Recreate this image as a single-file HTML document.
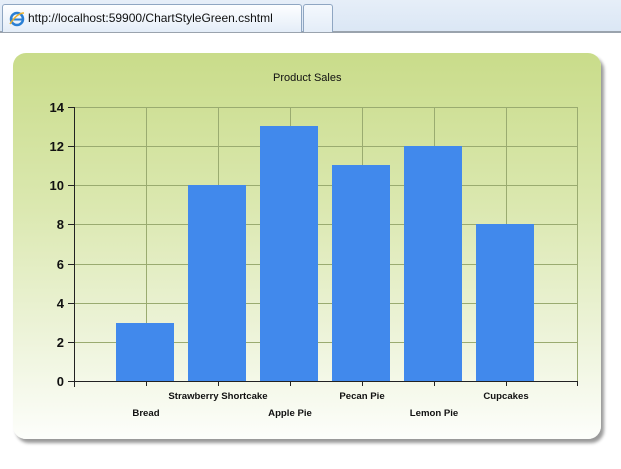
<!DOCTYPE html>
<html><head><style>
body{margin:0;width:621px;height:469px;background:#fff;position:relative;overflow:hidden;font-family:"Liberation Sans",sans-serif}
.bar{position:absolute;left:0;top:0;width:621px;height:31px;background:linear-gradient(#e6eef8,#dbe7f5);border-bottom:2px solid #9aa3ad}
.tab{position:absolute;left:2px;top:4px;width:298px;height:27px;background:linear-gradient(#fdfeff,#e4edf8);border:1px solid #8fa6c2;border-bottom:none;border-radius:3px 3px 0 0;font-size:12px;color:#111;line-height:26px}
.tab2{position:absolute;left:303px;top:4px;width:28px;height:27px;background:linear-gradient(#f4f8fd,#e4edf8);border:1px solid #8fa6c2;border-bottom:none;border-radius:3px 3px 0 0}
.panel{position:absolute;left:13px;top:53px;width:588px;height:386px;border-radius:13px;background:linear-gradient(#c9dc8a 0%,#dbe8b0 40%,#f1f6e2 80%,#fdfefb 100%);box-shadow:3px 4px 3px #9a9a9a}
.t{position:absolute;font-size:9.6px;font-weight:bold;color:#111;white-space:nowrap;transform:translateX(-50%)}
.y{position:absolute;font-size:13px;font-weight:bold;color:#111;text-align:right;width:30px}
</style></head><body>
<div class="bar"><div class="tab"><svg style="position:absolute;left:6px;top:6px" width="16" height="16" viewBox="0 0 16 16"><circle cx="8" cy="8" r="6" fill="none" stroke="#2a7fd4" stroke-width="2.5"/><rect x="3" y="7.5" width="10" height="2" fill="#2a7fd4"/><path d="M1 13 Q8 2 15 2" stroke="#e8b030" stroke-width="1.5" fill="none"/></svg><span style="position:absolute;left:25px">http://localhost:59900/ChartStyleGreen.cshtml</span></div><div class="tab2"></div></div>
<div class="panel"></div>
<div style="position:absolute;left:273px;top:72px;font-size:11px;color:#111">Product Sales</div>
<svg style="position:absolute;left:0;top:0" width="621" height="469">
<g stroke="#9aab70" stroke-width="1" fill="none">
<path d="M74.5 107.5H577.5V381.5"/>
<path d="M74.5 342.5H577.5M74.5 303.5H577.5M74.5 264.5H577.5M74.5 224.5H577.5M74.5 185.5H577.5M74.5 146.5H577.5"/>
<path d="M146.5 107V381M218.5 107V381M290.5 107V381M362.5 107V381M434.5 107V381M506.5 107V381"/>
</g>
<g fill="#4189ec">
<rect x="116" y="323" width="58" height="58"/>
<rect x="188" y="185" width="58" height="196"/>
<rect x="260" y="126" width="58" height="255"/>
<rect x="332" y="165" width="58" height="216"/>
<rect x="404" y="146" width="58" height="235"/>
<rect x="476" y="224" width="58" height="157"/>
</g>
<g stroke="#222" stroke-width="1">
<path d="M74.5 107V387M68 381.5H578"/>
<path d="M68 107.5H74M68 146.5H74M68 185.5H74M68 224.5H74M68 264.5H74M68 303.5H74M68 342.5H74"/>
<path d="M146.5 381V386M218.5 381V386M290.5 381V386M362.5 381V386M434.5 381V386M506.5 381V386M577.5 381V386"/>
</g>
</svg>
<div class="y" style="left:34px;top:100px">14</div>
<div class="y" style="left:34px;top:139px">12</div>
<div class="y" style="left:34px;top:178px">10</div>
<div class="y" style="left:34px;top:217px">8</div>
<div class="y" style="left:34px;top:257px">6</div>
<div class="y" style="left:34px;top:296px">4</div>
<div class="y" style="left:34px;top:335px">2</div>
<div class="y" style="left:34px;top:374px">0</div>
<div class="t" style="left:146px;top:408px">Bread</div>
<div class="t" style="left:218px;top:391px">Strawberry Shortcake</div>
<div class="t" style="left:290px;top:408px">Apple Pie</div>
<div class="t" style="left:362px;top:391px">Pecan Pie</div>
<div class="t" style="left:434px;top:408px">Lemon Pie</div>
<div class="t" style="left:506px;top:391px">Cupcakes</div>
</body></html>
